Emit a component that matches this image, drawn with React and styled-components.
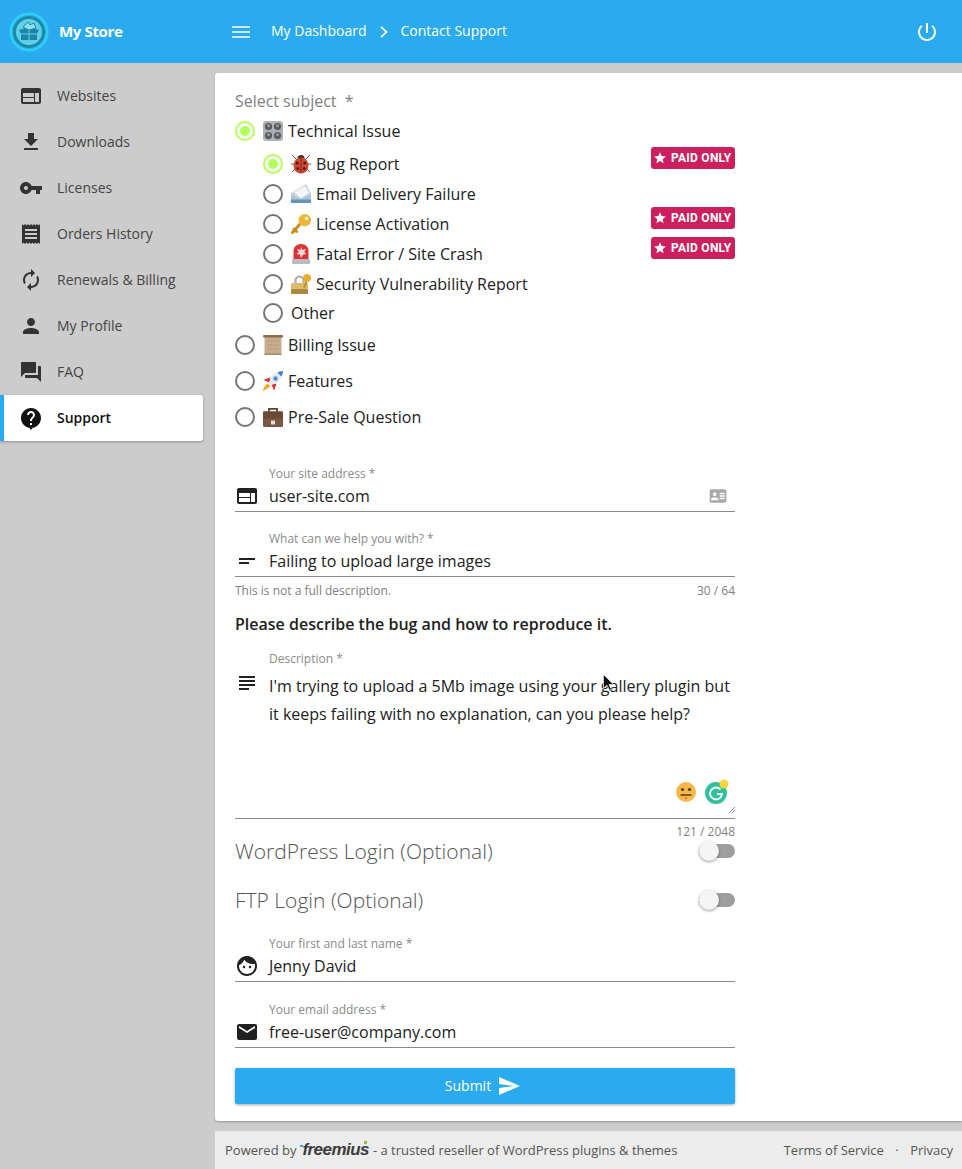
import React from "react";
import styled, { createGlobalStyle } from "styled-components";

const Global = createGlobalStyle`
  html, body { margin: 0; padding: 0; height: 1169px; overflow: hidden; background: #cccccc; }
  body { font-family: "Open Sans", "Liberation Sans", sans-serif; color: #212121; }
  * { box-sizing: border-box; }
`;

const P = {
  web: "M20 4H4c-1.1 0-1.99.9-1.99 2L2 18c0 1.1.9 2 2 2h16c1.1 0 2-.9 2-2V6c0-1.1-.9-2-2-2zm-5 14H4v-4h11v4zm0-5H4V9h11v4zm5 5h-4V9h4v9z",
  download: "M19 9h-4V3H9v6H5l7 7 7-7zM5 18v2h14v-2H5z",
  key: "M12.65 10C11.83 7.67 9.61 6 7 6c-3.31 0-6 2.69-6 6s2.69 6 6 6c2.61 0 4.83-1.67 5.65-4H17v4h4v-4h2v-4H12.65zM7 14c-1.1 0-2-.9-2-2s.9-2 2-2 2 .9 2 2-.9 2-2 2z",
  receipt: "M18 17H6v-2h12v2zm0-4H6v-2h12v2zm0-4H6V7h12v2zM3 22l1.5-1.5L6 22l1.5-1.5L9 22l1.5-1.5L12 22l1.5-1.5L15 22l1.5-1.5L18 22l1.5-1.5L21 22V2l-1.5 1.5L18 2l-1.5 1.5L15 2l-1.5 1.5L12 2l-1.5 1.5L9 2 7.5 3.5 6 2 4.5 3.5 3 2v20z",
  renew: "M12 6v3l4-4-4-4v3c-4.42 0-8 3.58-8 8 0 1.57.46 3.03 1.24 4.26L6.7 14.8c-.45-.83-.7-1.79-.7-2.8 0-3.31 2.69-6 6-6zm6.76 1.74L17.3 9.2c.44.84.7 1.79.7 2.8 0 3.31-2.69 6-6 6v-3l-4 4 4 4v-3c4.42 0 8-3.58 8-8 0-1.57-.46-3.03-1.24-4.26z",
  person: "M12 12c2.21 0 4-1.79 4-4s-1.79-4-4-4-4 1.79-4 4 1.79 4 4 4zm0 2c-2.67 0-8 1.34-8 4v2h16v-2c0-2.66-5.33-4-8-4z",
  forum: "M21 6h-2v9H6v2c0 .55.45 1 1 1h11l4 4V7c0-.55-.45-1-1-1zm-4 6V3c0-.55-.45-1-1-1H3c-.55 0-1 .45-1 1v14l4-4h10c.55 0 1-.45 1-1z",
  help: "M12 2C6.48 2 2 6.48 2 12c0 5 3.7 9.2 8.5 9.9L12 24l1.5-2.1C18.300 21.200 22 17 22 12c0-5.520-4.480-10-10-10zm1 17h-2v-2h2v2zm2.070-7.750l-.9.920C13.450 12.900 13 13.500 13 15h-2v-.5c0-1.100.45-2.100 1.170-2.830l1.240-1.260c.37-.36.59-.86.59-1.410 0-1.100-.9-2-2-2s-2 .9-2 2H8c0-2.210 1.790-4 4-4s4 1.790 4 4c0 .88-.36 1.680-.93 2.250z",
  card: "M20 4H4c-1.100 0-2 .9-2 2v12c0 1.100.9 2 2 2h16c1.100 0 2-.9 2-2V6c0-1.100-.9-2-2-2zM8 7.500a2.250 2.250 0 1 1 0 4.500 2.250 2.250 0 0 1 0-4.500zM12.500 17H3.500v-1c0-1.700 3-2.600 4.500-2.600s4.500.9 4.500 2.600v1zm7.500-1h-6v-2h6v2zm0-3h-6v-2h6v2zm0-3h-6V8h6v2z",
  short: "M4 9h16v2H4V9zm0 4h10v2H4v-2z",
  subject: "M14 17H4v2h10v-2zm6-8H4v2h16V9zM4 15h16v-2H4v2zM4 5v2h16V5H4z",
  face: "M9 11.750c-.69 0-1.250.56-1.250 1.250s.56 1.250 1.250 1.250 1.250-.56 1.250-1.250-.56-1.250-1.250-1.250zm6 0c-.69 0-1.250.56-1.250 1.250s.56 1.250 1.250 1.250 1.250-.56 1.250-1.250-.56-1.250-1.250-1.250zM12 2C6.480 2 2 6.480 2 12s4.480 10 10 10 10-4.480 10-10S17.520 2 12 2zm0 18c-4.410 0-8-3.590-8-8 0-.29.02-.58.05-.86 2.360-1.050 4.230-2.980 5.210-5.370C11.070 8.330 14.050 10 17.420 10c.78 0 1.530-.09 2.250-.26.21.71.33 1.470.33 2.260 0 4.410-3.590 8-8 8z",
  mail: "M20 4H4c-1.100 0-1.990.9-1.990 2L2 18c0 1.100.9 2 2 2h16c1.100 0 2-.9 2-2V6c0-1.100-.9-2-2-2zm0 4l-8 5-8-5V6l8 5 8-5v2z",
  send: "M2.010 21L23 12 2.010 3 2 10l15 2-15 2z",
  star: "M12 17.270L18.180 21l-1.640-7.030L22 9.240l-7.190-.61L12 2 9.190 8.630 2 9.240l5.460 4.730L5.820 21z",
  power: "M13 3h-2v10h2V3zm4.830 2.170l-1.420 1.420C17.990 7.860 19 9.810 19 12c0 3.870-3.130 7-7 7s-7-3.130-7-7c0-2.190 1.010-4.140 2.580-5.420L6.170 5.170C4.230 6.820 3 9.260 3 12c0 4.970 4.030 9 9 9s9-4.030 9-9c0-2.740-1.230-5.180-3.170-6.830z",
};

const Svg = styled.svg`
  display: block;
  flex: none;
  width: ${(p) => p.$size || 24}px;
  height: ${(p) => p.$size || 24}px;
  fill: ${(p) => p.$color || "currentColor"};
`;
const Icon = ({ name, size, color }) => (
  <Svg viewBox="0 0 24 24" $size={size} $color={color}><path d={P[name]} /></Svg>
);

/* ---------- emoji drawings ---------- */
const EmojiBox = styled.svg`
  display: block;
  flex: none;
  width: 20px;
  height: 20px;
`;
const Knobs = () => (
  <EmojiBox viewBox="0 0 20 20">
    <rect x="0" y="0" width="20" height="20" rx="3" fill="#aeb2b6" />
    {[[5.5, 5.5], [14.500, 5.5], [5.5, 14.500], [14.500, 14.500]].map(([x, y]) => (
      <g key={`${x}${y}`}>
        <circle cx={x} cy={y} r="3.6" fill="#55585c" />
        <circle cx={x} cy={y - 0.8} r="1.6" fill="#93979c" />
      </g>
    ))}
  </EmojiBox>
);
const Bug = () => (
  <EmojiBox viewBox="0 0 20 20">
    <path d="M1 1l5 5M19 1l-5 5M0 10h4M20 10h-4M1 18l4-4M19 18l-4-4" stroke="#6a5a5a" strokeWidth="1" />
    <circle cx="10" cy="4.500" r="3.500" fill="#3a2e2e" />
    <ellipse cx="10" cy="11.500" rx="7.500" ry="8" fill="#d4472f" />
    <path d="M10 4v15" stroke="#5c2a20" strokeWidth=".8" />
    <circle cx="6.200" cy="9" r="1.600" fill="#4a2018" />
    <circle cx="13.800" cy="9" r="1.600" fill="#4a2018" />
    <circle cx="6.800" cy="14.500" r="1.500" fill="#4a2018" />
    <circle cx="13.200" cy="14.500" r="1.500" fill="#4a2018" />
  </EmojiBox>
);
const Envelope = () => (
  <EmojiBox viewBox="0 0 20 20">
    <path d="M0 9l15-9 5 9v10H0z" fill="#cfd8e0" />
    <path d="M3 8l11-6 4 7-8 5z" fill="#f4f6f8" />
    <path d="M0 10l10 5 10-5v9H0z" fill="#b4c4d2" />
    <path d="M0 15.500h20V19H0z" fill="#5e97bd" />
  </EmojiBox>
);
const KeyE = () => (
  <EmojiBox viewBox="0 0 20 20">
    <path d="M1.500 18.500l8-9M3 15l2.500 2.500" stroke="#c98f1e" strokeWidth="3" strokeLinecap="round" />
    <circle cx="13.800" cy="6.200" r="6.200" fill="#eeb63a" />
    <circle cx="15.500" cy="4.500" r="1.700" fill="#fff6d8" />
  </EmojiBox>
);
const Siren = () => (
  <EmojiBox viewBox="0 0 20 20">
    <path d="M2.500 7c0-4 3-7 7.500-7s7.500 3 7.500 7v9h-15z" fill="#dc3234" />
    <path d="M10 2.500l1.500 3.500 3.500-1.200-1.700 3.500 2.400 1.700-3.500.6L10 14l-1.200-3.400-3.500-.6 2.400-1.700L6 4.800l3.500 1.200z" fill="#fbd7d4" />
    <rect x="1" y="15" width="18" height="5" rx="1" fill="#b8bdc2" />
  </EmojiBox>
);
const Lock = () => (
  <EmojiBox viewBox="0 0 20 20">
    <path d="M4.500 10V6.500a4 4 0 0 1 8 0V10" fill="none" stroke="#a8acb0" strokeWidth="2.200" />
    <rect x="0" y="9" width="17" height="11" rx="1.500" fill="#dcbb6c" />
    <rect x="0" y="15" width="17" height="5" rx="1" fill="#a98840" />
    <circle cx="16" cy="4" r="4" fill="#e9ad30" />
    <path d="M15 6.500l-3 6.500 2.200 1 2.200-6z" fill="#c98f1e" />
  </EmojiBox>
);
const Scroll = () => (
  <EmojiBox viewBox="0 0 20 20">
    <rect x="1.500" y="1" width="17" height="19" fill="#c7ad8d" />
    <rect x="0" y="0" width="20" height="2.500" rx="1" fill="#8a6c4d" />
    <path d="M1.500 18.500h17V20h-17z" fill="#a78a68" />
    <path d="M4 6h12M4 10h12M4 14h12" stroke="#b99e7c" strokeWidth="1.200" />
  </EmojiBox>
);
const Rocket = () => (
  <EmojiBox viewBox="0 0 20 20">
    <path d="M20 0C14 .5 9.500 3 6.500 7.500L5 11.500 8.500 15l4-1.500C17 10.500 19.500 6 20 0z" fill="#e3e9ee" />
    <path d="M20 0c-2.200.2-4 .8-5.600 1.600l4 4C19.200 4 19.800 2.200 20 0z" fill="#3f7fc4" />
    <circle cx="12.500" cy="7.500" r="2.200" fill="#4d8ed0" />
    <path d="M7 6.500L0 9l3.500 1 2 1.500 1.500-2zM13.500 13L11 20l-1-3.500-1.500-2 2-1.500z" fill="#d8362f" />
    <path d="M4.500 12.500l3 3L0 20c0-2.500 2-6 4.500-7.500z" fill="#f5a623" />
  </EmojiBox>
);
const Briefcase = () => (
  <EmojiBox viewBox="0 0 20 20">
    <path d="M6 5V1.800h8V5" fill="none" stroke="#5d4030" strokeWidth="1.800" />
    <rect x="0" y="4.500" width="20" height="15.500" rx="1.500" fill="#7b5640" />
    <rect x="0" y="4.500" width="20" height="7" fill="#6a4936" />
    <rect x="8" y="13.500" width="4" height="4" rx=".5" fill="#e8e0d8" />
  </EmojiBox>
);

/* ---------- shell ---------- */
const Page = styled.div`
  width: 962px;
  height: 1169px;
  display: flex;
  flex-direction: column;
  overflow: hidden;
  position: relative;
`;
const Header = styled.header`
  flex: none;
  height: 63px;
  background: #2babef;
  color: #fff;
  display: flex;
  align-items: center;
  padding-right: 23px;
`;
const Brand = styled.div`
  width: 232px;
  display: flex;
  align-items: center;
  gap: 10px;
  padding-left: 9px;
  font-size: 15px;
  font-weight: 700;
  letter-spacing: -0.35px;
`;
const BrandName = styled.span`
  margin-bottom: 2px;
`;
const Logo = styled.svg`
  width: 40px;
  height: 40px;
  display: block;
  flex: none;
`;
const Burger = styled.svg`
  width: 18px;
  height: 12px;
  display: block;
  flex: none;
  margin-right: 21px;
`;
const Crumb = styled.span`
  font-size: 14px;
  font-weight: 500;
  margin-bottom: 2px;
`;
const Chevron = styled.svg`
  width: 8px;
  height: 12px;
  display: block;
  flex: none;
  margin: 0 13px;
`;
const PowerSlot = styled.div`
  margin-left: auto;
`;
const Body = styled.div`
  flex: 1;
  display: flex;
  min-height: 0;
`;
const Sidebar = styled.nav`
  flex: none;
  width: 215px;
  padding-top: 10px;
`;
const NavItem = styled.div`
  width: 203px;
  height: 46px;
  display: flex;
  align-items: center;
  gap: 14px;
  padding-left: ${(p) => (p.$active ? 15 : 19)}px;
  font-size: 14px;
  font-weight: ${(p) => (p.$active ? 600 : 400)};
  color: ${(p) => (p.$active ? "#111" : "#444")};
  background: ${(p) => (p.$active ? "#fff" : "transparent")};
  border-left: ${(p) => (p.$active ? "4px solid #2babef" : "0")};
  border-radius: ${(p) => (p.$active ? "0 3px 3px 0" : "0")};
  box-shadow: ${(p) => (p.$active ? "0 1px 3px rgba(0,0,0,.3)" : "none")};
`;
const NavIcon = styled.span`
  color: ${(p) => (p.$active ? "#111" : "#333")};
`;
const NavLabel = styled.span`
  margin-bottom: 2px;
`;
const Main = styled.main`
  flex: 1;
  min-width: 0;
  padding-top: 10px;
  display: flex;
  flex-direction: column;
  gap: 10px;
`;
const Card = styled.section`
  background: #fff;
  border-radius: 3px 0 0 3px;
  box-shadow: 0 1px 2px rgba(0,0,0,.25);
  padding: 18px 0 17px 20px;
`;
const Form = styled.form`
  width: 500px;
  display: flex;
  flex-direction: column;
  position: relative;
`;
const SubjectLabel = styled.div`
  font-size: 16px;
  line-height: 20px;
  color: #808080;
  letter-spacing: -0.03px;
  white-space: pre;
`;
const RadioGroup = styled.div`
  margin-top: 2px;
  display: flex;
  flex-direction: column;
`;
const Row = styled.div`
  position: relative;
  height: ${(p) => p.$h}px;
  display: flex;
  align-items: center;
  padding-left: ${(p) => (p.$nested ? 28 : 0)}px;
  font-size: 16px;
  color: #212121;
`;
const Ring = styled.span`
  width: 20px;
  height: 20px;
  flex: none;
  border-radius: 50%;
  border: 2px solid ${(p) => (p.$on ? "#b2ff59" : "#757575")};
  display: flex;
  align-items: center;
  justify-content: center;
  margin-right: 8px;
  &::after {
    content: "";
    width: 10px;
    height: 10px;
    border-radius: 50%;
    background: ${(p) => (p.$on ? "#b2ff59" : "transparent")};
  }
`;
const RowText = styled.span`
  margin-left: ${(p) => (p.$bare ? 0 : 5)}px;
`;
const Badge = styled.span`
  position: absolute;
  right: 0;
  top: ${(p) => p.$top}px;
  width: 84px;
  height: 22px;
  background: #cd1f5e;
  border-radius: 3px;
  color: #fff;
  font-family: Roboto, "Liberation Sans", sans-serif;
  font-size: 12px;
  font-weight: 700;
  display: flex;
  align-items: center;
  gap: 4px;
  padding-left: 2px;
  letter-spacing: .25px;
`;
const Field = styled.div`
  margin-top: ${(p) => p.$mt}px;
`;
const FieldLabel = styled.div`
  height: 16px;
  line-height: 18px;
  padding-left: 34px;
  font-size: 12px;
  color: #8a8a8a;
`;
const InputRow = styled.div`
  height: 31px;
  display: flex;
  align-items: center;
  gap: 10px;
  border-bottom: 1px solid #8a8a8a;
  font-size: 16px;
  color: #212121;
  padding-bottom: 1px;
`;
const Hints = styled.div`
  margin-top: 7px;
  height: 14px;
  line-height: 14px;
  display: flex;
  justify-content: space-between;
  font-size: 12px;
  color: #808080;
`;
const Count = styled.div`
  margin-top: 6px;
  height: 14px;
  line-height: 14px;
  text-align: right;
  font-size: 12px;
  color: #808080;
`;
const TrailingIcon = styled.span`
  margin-left: auto;
  margin-right: 7px;
`;
const Heading = styled.h3`
  margin: 16px 0 0;
  height: 20px;
  line-height: 20px;
  font-size: 16px;
  font-weight: 600;
  color: #212121;
`;
const TextArea = styled.div`
  position: relative;
  height: 153px;
  display: flex;
  gap: 10px;
  border-bottom: 1px solid #8a8a8a;
  padding-top: 6px;
  font-size: 16px;
  line-height: 28px;
  color: #212121;
`;
const TextIcon = styled.span`
  margin-top: -1px;
`;
const Overlays = styled.div`
  position: absolute;
  right: 4px;
  bottom: 12px;
  display: flex;
  align-items: flex-start;
  gap: 8px;
`;
const FaceDraw = styled.svg`
  display: block;
  flex: none;
  margin-top: 3px;
`;
const SmallDraw = styled.svg`
  display: block;
  flex: none;
`;
const Grip = styled.svg`
  position: absolute;
  right: 0;
  bottom: 5px;
  width: 6px;
  height: 6px;
`;
const Pointer = styled.svg`
  position: absolute;
  left: 368px;
  top: 8px;
  width: 11px;
  height: 17px;
`;
const ToggleRow = styled.div`
  margin-top: ${(p) => p.$mt}px;
  height: 26px;
  display: flex;
  align-items: center;
  justify-content: space-between;
  font-size: 21px;
  font-weight: 300;
  color: #555;
`;
const Toggle = styled.span`
  position: relative;
  width: 36px;
  height: 14px;
  border-radius: 7px;
  background: #9e9e9e;
  &::after {
    content: "";
    position: absolute;
    left: 0;
    top: -3px;
    width: 20px;
    height: 20px;
    border-radius: 50%;
    background: #f5f5f5;
    box-shadow: 0 1px 3px rgba(0,0,0,.4);
  }
`;
const Submit = styled.button`
  margin-top: 20px;
  height: 36px;
  border: 0;
  border-radius: 2px;
  background: #2babef;
  color: #fff;
  font: 400 14px "Open Sans", sans-serif;
  display: flex;
  align-items: center;
  justify-content: center;
  gap: 6px;
  box-shadow: 0 1px 3px rgba(0,0,0,.35);
  padding: 0 4px 0 0;
`;
const SubmitLabel = styled.span`
  margin-bottom: 2px;
`;
const Footer = styled.footer`
  height: 38px;
  background: #ececec;
  display: flex;
  align-items: center;
  padding: 0 9px 0 10px;
  font-size: 13px;
  color: #555;
  white-space: pre;
`;
const Freemius = styled.span`
  position: relative;
  margin: 0 4px 0 6px;
  font-family: "Liberation Sans", sans-serif;
  font-size: 17px;
  font-weight: 700;
  font-style: italic;
  letter-spacing: -0.55px;
  color: #3c3c3c;
  &::before {
    content: "";
    position: absolute;
    left: -2px;
    top: 5px;
    width: 3px;
    height: 2px;
    background: #29abe2;
  }
  &::after {
    content: "";
    position: absolute;
    right: 2px;
    top: 1px;
    width: 3px;
    height: 3px;
    background: #8cc63f;
  }
`;
const FooterLinks = styled.div`
  margin-left: auto;
  display: flex;
  gap: 11.500px;
`;

const nav = [
  ["web", "Websites"],
  ["download", "Downloads"],
  ["key", "Licenses"],
  ["receipt", "Orders History"],
  ["renew", "Renewals & Billing"],
  ["person", "My Profile"],
  ["forum", "FAQ"],
  ["help", "Support", true],
];

const Badged = ({ top }) => (
  <Badge $top={top}><Icon name="star" size={14} color="#fff" />PAID ONLY</Badge>
);

export default function App() {
  return (
    <Page>
      <Global />
      <Header>
        <Brand>
          <Logo viewBox="0 0 40 40">
            <circle cx="20" cy="20" r="19.500" fill="#2fd0f5" />
            <circle cx="20" cy="20" r="17" fill="#2babef" />
            <circle cx="20" cy="20" r="16" fill="#1d8aa6" />
            <circle cx="20" cy="20" r="13" fill="#5fd0ea" />
            <path d="M10 18l10-3 10 3-2 4v6H12v-6z" fill="#1d86a8" />
            <path d="M14 15l5-5 2 3 4-2 2 5-7 2z" fill="#8fe3f2" stroke="#1d86a8" strokeWidth="1" />
            <path d="M20 18v10M10 22h20" stroke="#5fd0ea" strokeWidth="1" />
          </Logo>
          <BrandName>My Store</BrandName>
        </Brand>
        <Burger viewBox="0 0 18 12">
          <path d="M0 1h18M0 6h18M0 11h18" stroke="#fff" strokeWidth="1.600" />
        </Burger>
        <Crumb>My Dashboard</Crumb>
        <Chevron viewBox="0 0 8 12">
          <path d="M1 .8L6.500 6 1 11.200" fill="none" stroke="#fff" strokeWidth="1.800" />
        </Chevron>
        <Crumb>Contact Support</Crumb>
        <PowerSlot><Icon name="power" size={24} color="#fff" /></PowerSlot>
      </Header>
      <Body>
        <Sidebar>
          {nav.map(([icon, label, active]) => (
            <NavItem key={label} $active={active}>
              <NavIcon $active={active}><Icon name={icon} /></NavIcon>
              <NavLabel>{label}</NavLabel>
            </NavItem>
          ))}
        </Sidebar>
        <Main>
          <Card>
            <Form>
              <SubjectLabel>Select subject  *</SubjectLabel>
              <RadioGroup>
                <Row $h={36}><Ring $on /><Knobs /><RowText>Technical Issue</RowText></Row>
                <Row $h={30} $nested><Ring $on /><Bug /><RowText>Bug Report</RowText><Badged top={-2} /></Row>
                <Row $h={30} $nested><Ring /><Envelope /><RowText>Email Delivery Failure</RowText></Row>
                <Row $h={30} $nested><Ring /><KeyE /><RowText>License Activation</RowText><Badged top={-2} /></Row>
                <Row $h={30} $nested><Ring /><Siren /><RowText>Fatal Error / Site Crash</RowText><Badged top={-2} /></Row>
                <Row $h={30} $nested><Ring /><Lock /><RowText>Security Vulnerability Report</RowText></Row>
                <Row $h={28} $nested><Ring /><RowText $bare>Other</RowText></Row>
                <Row $h={36}><Ring /><Scroll /><RowText>Billing Issue</RowText></Row>
                <Row $h={36}><Ring /><Rocket /><RowText>Features</RowText></Row>
                <Row $h={36}><Ring /><Briefcase /><RowText>Pre-Sale Question</RowText></Row>
              </RadioGroup>

              <Field $mt={30}>
                <FieldLabel>Your site address *</FieldLabel>
                <InputRow>
                  <Icon name="web" />user-site.com
                  <TrailingIcon><Icon name="card" size={20} color="#a8a8a8" /></TrailingIcon>
                </InputRow>
              </Field>
              <Field $mt={18}>
                <FieldLabel>What can we help you with? *</FieldLabel>
                <InputRow><Icon name="short" />Failing to upload large images</InputRow>
                <Hints><span>This is not a full description.</span><span>30 / 64</span></Hints>
              </Field>
              <Heading>Please describe the bug and how to reproduce it.</Heading>
              <Field $mt={16}>
                <FieldLabel>Description *</FieldLabel>
                <TextArea>
                  <TextIcon><Icon name="subject" /></TextIcon>
                  <div>
                    I'm trying to upload a 5Mb image using your gallery plugin but<br />
                    it keeps failing with no explanation, can you please help?
                  </div>
                  <Pointer viewBox="0 0 11 17">
                    <path d="M.5.5v14l3.500-3.500 2.500 5.500 2-1-2.500-5h4.500z" fill="#111" stroke="#fff" strokeWidth=".6" />
                  </Pointer>
                  <Overlays>
                    <FaceDraw width="22" height="22" viewBox="0 0 22 22">
                      <circle cx="11" cy="11" r="10" fill="#f7b84b" />
                      <circle cx="7.500" cy="8.500" r="1.600" fill="#5a3d1a" />
                      <circle cx="14.500" cy="8.500" r="1.600" fill="#5a3d1a" />
                      <path d="M5.500 14h11" stroke="#5a3d1a" strokeWidth="1.500" />
                      <circle cx="11" cy="17" r="1" fill="#e2574c" />
                    </FaceDraw>
                    <SmallDraw width="26" height="28" viewBox="0 0 26 28">
                      <circle cx="11" cy="15" r="11" fill="#30c19b" />
                      <path d="M15.500 11.500A6 6 0 1 0 17 16h-5" fill="none" stroke="#fff" strokeWidth="1.800" />
                      <circle cx="19" cy="6" r="4.500" fill="#fdd43a" />
                    </SmallDraw>
                  </Overlays>
                  <Grip viewBox="0 0 6 6"><path d="M0 6l6-6M3 6l3-3" stroke="#777" strokeWidth=".8" /></Grip>
                </TextArea>
                <Count>121 / 2048</Count>
              </Field>
              <ToggleRow $mt={-1}>WordPress Login (Optional)<Toggle /></ToggleRow>
              <ToggleRow $mt={23}>FTP Login (Optional)<Toggle /></ToggleRow>
              <Field $mt={22}>
                <FieldLabel>Your first and last name *</FieldLabel>
                <InputRow><Icon name="face" />Jenny David</InputRow>
              </Field>
              <Field $mt={19}>
                <FieldLabel>Your email address *</FieldLabel>
                <InputRow><Icon name="mail" />free-user@company.com</InputRow>
              </Field>
              <Submit type="button"><SubmitLabel>Submit</SubmitLabel><Icon name="send" size={24} color="#fff" /></Submit>
            </Form>
          </Card>
          <Footer>
            Powered by<Freemius>freemius</Freemius>- a trusted reseller of WordPress plugins &amp; themes
            <FooterLinks><span>Terms of Service</span><span>·</span><span>Privacy</span></FooterLinks>
          </Footer>
        </Main>
      </Body>
    </Page>
  );
}
